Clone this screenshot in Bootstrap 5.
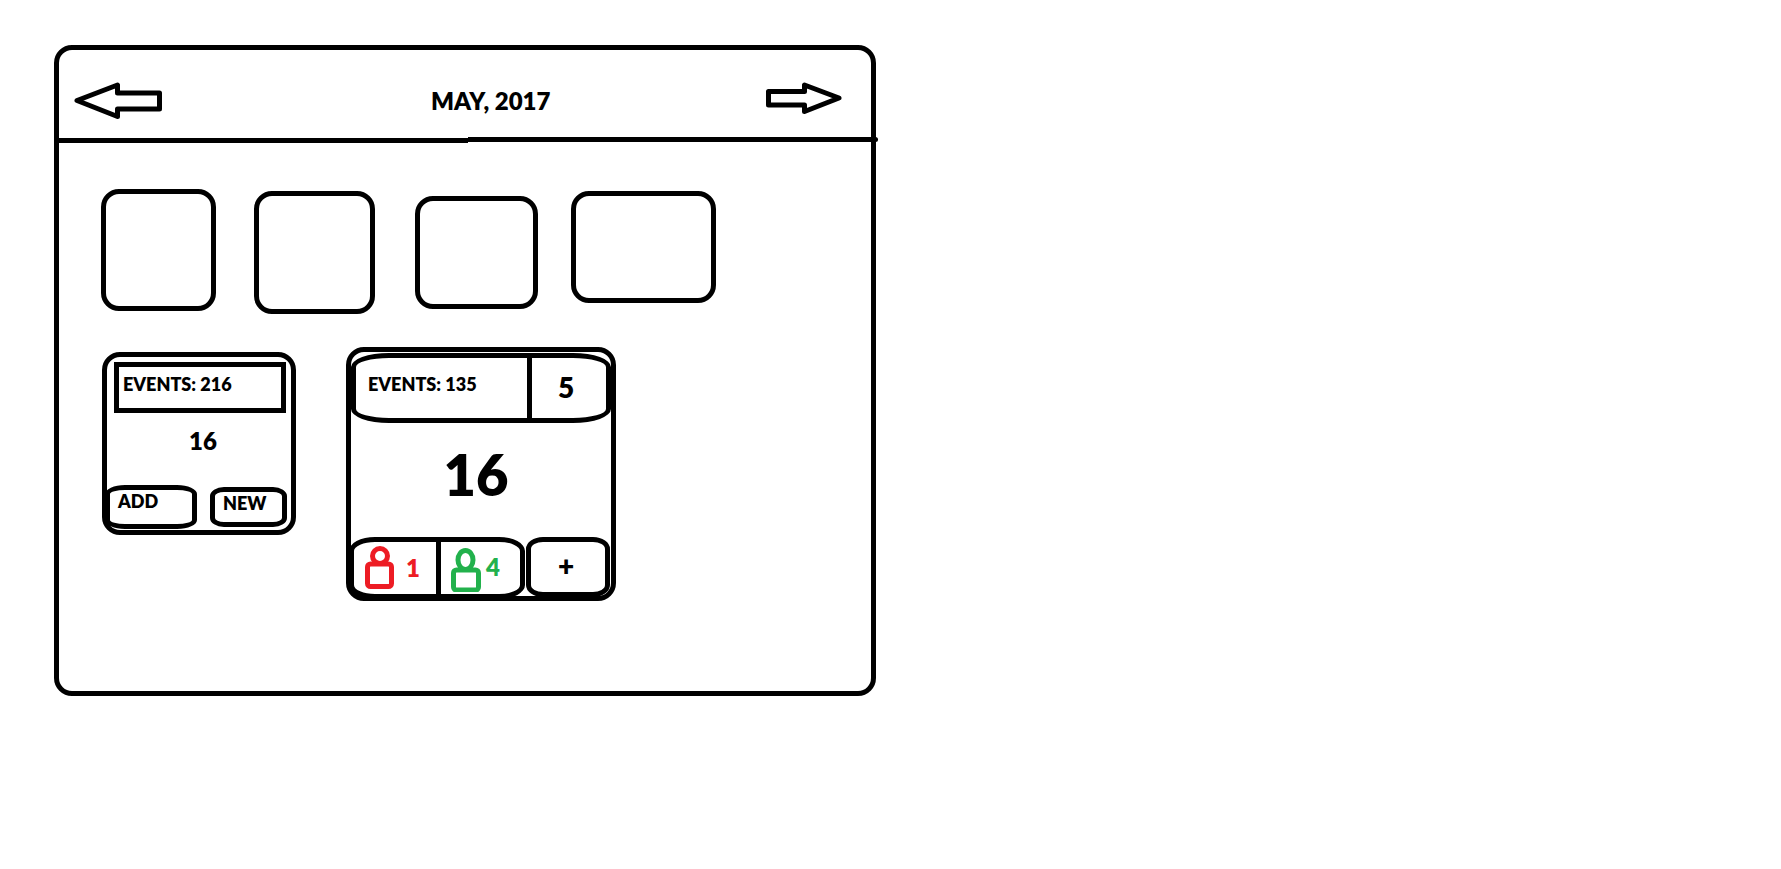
<!DOCTYPE html>
<html lang="en">
<head>
<meta charset="utf-8">
<meta name="viewport" content="width=device-width, initial-scale=1">
<title>May, 2017</title>
<link href="https://cdn.jsdelivr.net/npm/bootstrap@5.3.0/dist/css/bootstrap.min.css" rel="stylesheet">
<style>
  body { font-family: Lato, "Open Sans", sans-serif; font-weight: 800; font-size: 18px; line-height: 22px; color: #000; background: #fff; }
  .board-col { padding: 45px 15px 40px 54px; }
  .ink { border: 5px solid #000; border-radius: 18px; }
  button { background: transparent; color: #000; font-weight: 800; }
  .month-bar { padding: 14px 29px 0 15px; height: 87px; }
  .month-title { font-size: 24px; line-height: 28px; padding-left: 54px; font-weight: 800; }
  .rule { height: 6px; margin-right: -7px; }
  .rule-part { height: 5px; background: #000; }
  .tiles { padding: 46px 42px 0; }
  .tile-a { width: 115px; height: 122px; margin-right: 38px; }
  .tile-b { width: 121px; height: 123px; margin: 2px 40px 0 0; }
  .tile-c { width: 123px; height: 113px; margin: 7px 33px 0 0; }
  .tile-d { width: 145px; height: 112px; margin-top: 2px; }
  .days { padding: 33px 43px 90px; gap: 50px; }
  .day-small { width: 194px; height: 183px; margin-top: 5px; }
  .day-large { width: 270px; height: 254px; }
  .events-box { border: 5px solid #000; height: 51px; margin: 5px 5px 0 7px; padding: 6px 4px; }
  .num-md { font-size: 24px; line-height: 28px; }
  .small-date { padding: 14px 0 0 8px; }
  .num-lg { font-size: 28px; line-height: 32px; }
  .num-xl { font-size: 56px; line-height: 64px; }
  .large-date { padding: 20px 10px 0 0; }
  .small-actions { margin: 0 4px 1px -2px; }
  .small-btn { border: 5px solid #000; border-radius: 20px / 9px; padding: 0 8px; text-align: left; display: flex; }
  .btn-add { width: 92px; height: 44px; }
  .btn-new { width: 77px; height: 40px; border-radius: 14px / 9px; }
  .strip { border: 5px solid #000; border-radius: 38px / 14px; height: 70px; margin-top: 1px; }
  .strip-events { padding: 15px 12px; }
  .strip-count { width: 79px; border-left: 5px solid #000; padding: 0 6px 2px 0; }
  .foot { margin: 0 1px -3px -2px; }
  .people { border: 5px solid #000; border-radius: 26px / 14px; width: 176px; height: 62px; }
  .person-btn { border: 0; padding: 0; font-size: 24px; line-height: 28px; }
  .person-red { width: 82px; color: #ed1c24; padding-left: 11px; gap: 11px; }
  .person-green { border-left: 5px solid #000; color: #22b14c; padding: 0 0 2px 10px; gap: 4px; }
  .btn-plus { width: 84px; height: 60px; border-radius: 17px / 12px; padding: 0 4px 4px 0; }
</style>
</head>
<body>
<main class="container-fluid p-0">
  <div class="row g-0">
    <div class="col-6 board-col">
      <section class="ink">
        <header class="month-bar d-flex align-items-center">
          <button type="button" class="border-0 p-0 d-flex" aria-label="Previous month">
            <svg width="88" height="38" viewBox="0 0 88 38" fill="none" stroke="#000" stroke-width="5" stroke-linejoin="round"><path d="M3 18.500 43.500 3V11H85.500V27H43.500V34.500Z"/></svg>
          </button>
          <h1 class="month-title flex-grow-1 text-center mb-0">MAY, 2017</h1>
          <button type="button" class="border-0 p-0 d-flex" aria-label="Next month">
            <svg width="76" height="38" viewBox="0 0 76 38" fill="none" stroke="#000" stroke-width="5" stroke-linejoin="round"><path d="M73 16 38.500 3V9.500H2.500V23H38.500V29.500Z"/></svg>
          </button>
        </header>
        <div class="rule d-flex">
          <div class="rule-part w-50 align-self-end"></div>
          <div class="rule-part w-50 rounded-end"></div>
        </div>
        <div class="tiles d-flex align-items-start">
          <div class="ink tile-a"></div>
          <div class="ink tile-b"></div>
          <div class="ink tile-c"></div>
          <div class="ink tile-d"></div>
        </div>
        <div class="days d-flex align-items-start">
          <article class="ink day-small d-flex flex-column">
            <div class="events-box">EVENTS: 216</div>
            <div class="num-md small-date text-center flex-grow-1">16</div>
            <div class="small-actions d-flex align-items-center justify-content-between">
              <button type="button" class="small-btn btn-add">ADD</button>
              <button type="button" class="small-btn btn-new">NEW</button>
            </div>
          </article>
          <article class="ink day-large d-flex flex-column">
            <div class="strip d-flex">
              <div class="strip-events flex-grow-1">EVENTS: 135</div>
              <div class="strip-count num-lg d-flex align-items-center justify-content-center">5</div>
            </div>
            <div class="num-xl large-date text-center flex-grow-1">16</div>
            <div class="foot d-flex justify-content-between">
              <div class="people d-flex">
                <button type="button" class="person-btn person-red d-flex align-items-center">
                  <svg width="30" height="46" viewBox="0 0 30 46" fill="none" stroke="currentColor" stroke-width="5"><circle cx="15" cy="11" r="7.500"/><rect x="2.500" y="19" width="24" height="22.500" rx="3"/></svg>
                  <span>1</span>
                </button>
                <button type="button" class="person-btn person-green flex-grow-1 d-flex align-items-center">
                  <svg width="31" height="50" viewBox="0 0 31 50" fill="none" stroke="currentColor" stroke-width="5"><ellipse cx="14.500" cy="18" rx="7.500" ry="9.500"/><rect x="2.500" y="28" width="25" height="20" rx="3"/></svg>
                  <span>4</span>
                </button>
              </div>
              <button type="button" class="ink btn-plus num-lg" aria-label="Add person">+</button>
            </div>
          </article>
        </div>
      </section>
    </div>
  </div>
</main>
<script src="https://cdn.jsdelivr.net/npm/bootstrap@5.3.0/dist/js/bootstrap.bundle.min.js"></script>
</body>
</html>
